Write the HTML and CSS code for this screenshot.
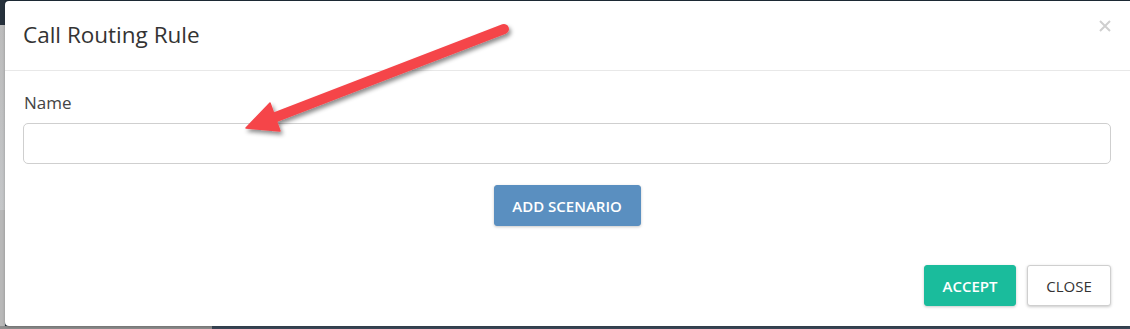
FILE: index.html
```html
<!DOCTYPE html>
<html lang="en">
<head>
<meta charset="utf-8">
<title>Call Routing Rule</title>
<link rel="stylesheet" href="styles.css">
</head>
<body>
<div class="modal">
  <div class="modal-header">
    <h4 class="modal-title">Call Routing Rule</h4>
    <button class="close" type="button" aria-label="Close">
      <svg width="12" height="12" viewBox="0 0 12 12"><path d="M1 1 L11 11 M11 1 L1 11" stroke="#cfcfcf" stroke-width="2" fill="none"/></svg>
    </button>
  </div>
  <div class="modal-body">
    <label class="field-label" for="name">Name</label>
    <input class="field-input" id="name" type="text">
    <div class="center-row">
      <button class="btn btn-primary" type="button">ADD SCENARIO</button>
    </div>
  </div>
  <div class="modal-footer">
    <button class="btn btn-success" type="button">ACCEPT</button>
    <button class="btn btn-default" type="button">CLOSE</button>
  </div>
</div>
<svg class="annotation" width="1130" height="329" viewBox="0 0 1130 329">
  <defs>
    <filter id="sh" x="-20%" y="-20%" width="140%" height="140%">
      <feDropShadow dx="2" dy="3" stdDeviation="2" flood-color="#000" flood-opacity="0.45"/>
    </filter>
  </defs>
  <g filter="url(#sh)" fill="#f5454a" stroke="#f5454a">
    <path d="M504 29 L268 120" stroke-width="10" stroke-linecap="round" fill="none"/>
    <path d="M246 128 L270 103 L280 131 Z" stroke-width="1.5" stroke-linejoin="round"/>
  </g>
</svg>
</body>
</html>
```

FILE: styles.css
```css
html, body {
  margin: 0;
  padding: 0;
}
body {
  width: 1130px;
  height: 329px;
  overflow: hidden;
  position: relative;
  font-family: "Open Sans", "Liberation Sans", sans-serif;
  color: #333;
  background:
    linear-gradient(to right, #8f8f8f 212px, #3b4959 212px) left bottom / 100% 3px no-repeat,
    linear-gradient(#27323d 25px, #bcbcbc 25px, #c4c6c8 210px, #b8b8b8 210px) left top / 5px 100% no-repeat,
    #1e2b36;
}
.modal {
  margin: 1px 0 0 5px;
  width: 1125px;
  background: #fff;
  border-radius: 4px 0 0 4px;
  box-shadow: 0 1px 3px rgba(0,0,0,0.25);
}
.modal-header {
  display: flex;
  justify-content: space-between;
  align-items: flex-start;
  padding: 19px 19px 20px 18px;
  border-bottom: 1px solid #e8e8e8;
}
.modal-title {
  margin: 0;
  font-size: 22.5px;
  line-height: 30px;
  font-weight: 400;
  color: #333;
}
.close {
  border: 0;
  background: none;
  padding: 0;
  margin: 0;
  width: 12px;
  height: 12px;
  display: flex;
  cursor: pointer;
}
.modal-body {
  padding: 20px 19px 0 18px;
  display: flex;
  flex-direction: column;
}
.field-label {
  font-size: 17px;
  line-height: 24px;
  color: #444;
  margin-bottom: 8px;
  align-self: flex-start;
  padding-left: 1px;
}
.field-input {
  box-sizing: border-box;
  height: 41px;
  width: 100%;
  border: 1px solid #cfcfcf;
  border-radius: 5px;
  margin: 0;
  padding: 6px 12px;
  font: inherit;
}
.center-row {
  display: flex;
  justify-content: center;
  margin-top: 21px;
}
.btn {
  box-sizing: border-box;
  height: 41px;
  border-radius: 3px;
  font-family: "Open Sans", "Liberation Sans", sans-serif;
  font-size: 15px;
  font-weight: 600;
  letter-spacing: 0;
  cursor: pointer;
  margin: 0;
  padding: 0;
  box-shadow: 0 1px 3px rgba(0,0,0,0.22);
}
.btn-primary {
  width: 147px;
  background: #5a8fc0;
  border: 1px solid #5a8fc0;
  color: #fff;
}
.modal-footer {
  display: flex;
  justify-content: flex-end;
  gap: 11px;
  padding: 39px 19px 20px 18px;
}
.btn-success {
  width: 92px;
  background: #1abc9c;
  border: 1px solid #1abc9c;
  color: #fff;
}
.btn-default {
  width: 84px;
  background: #fff;
  border: 1px solid #cfcfcf;
  color: #333;
  font-weight: 500;
}
.annotation {
  position: absolute;
  left: 0;
  top: 0;
  pointer-events: none;
}
```
